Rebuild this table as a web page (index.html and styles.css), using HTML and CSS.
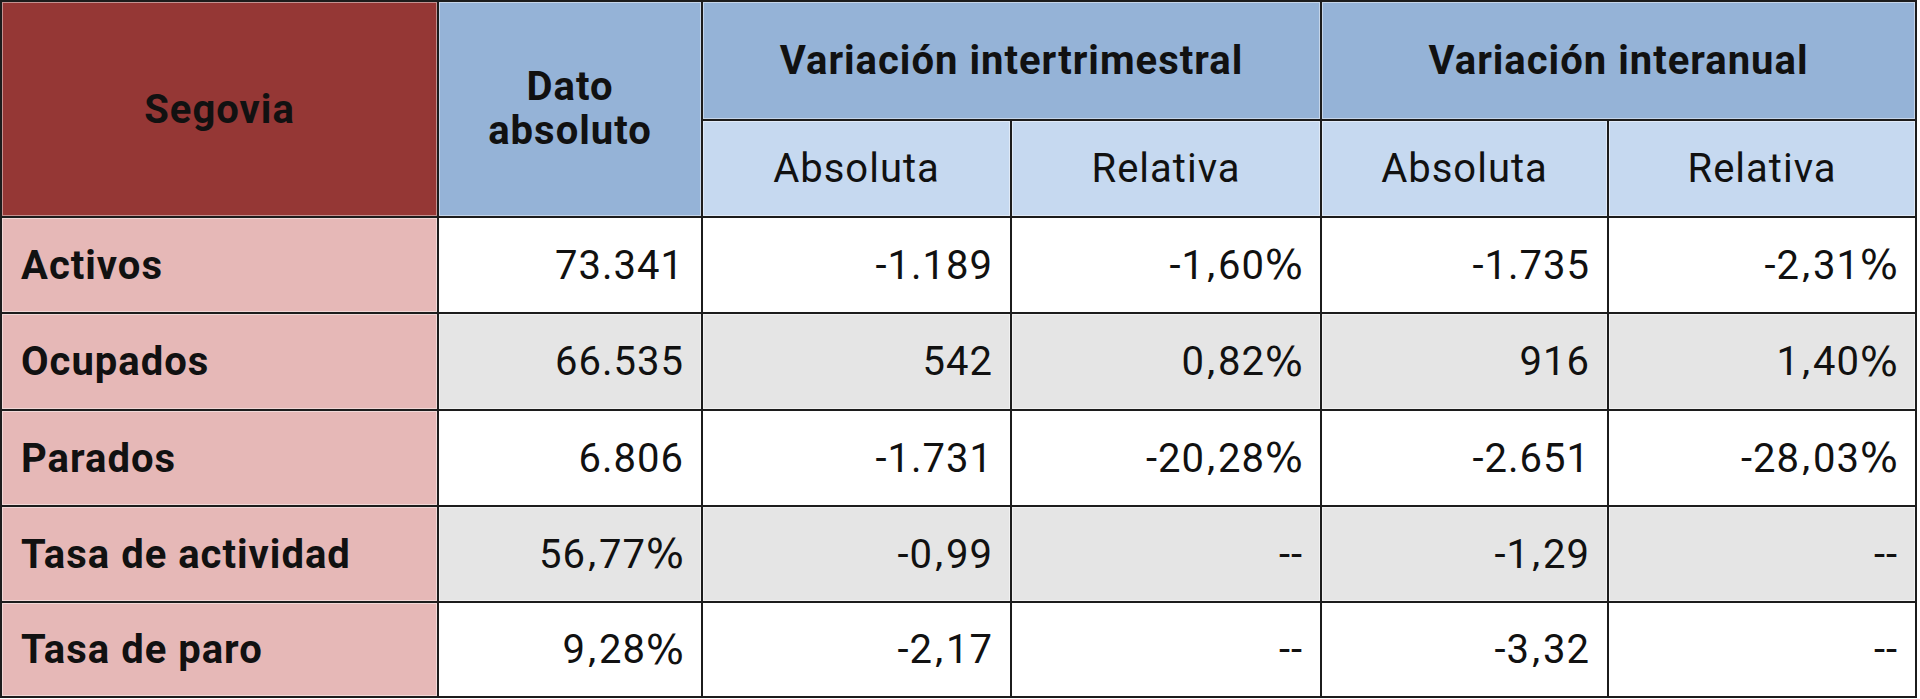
FILE: index.html
```html
<!DOCTYPE html>
<html lang="es">
<head>
<meta charset="utf-8">
<title>Segovia</title>
<link rel="stylesheet" href="styles.css">
</head>
<body>
<div class="grid">
  <div class="cell h-region span-r2">Segovia</div>
  <div class="cell h-main span-r2 center">Dato<br>absoluto</div>
  <div class="cell h-main span-c2 center">Variación intertrimestral</div>
  <div class="cell h-main span-c2 center">Variación interanual</div>
  <div class="cell h-sub center">Absoluta</div>
  <div class="cell h-sub center">Relativa</div>
  <div class="cell h-sub center">Absoluta</div>
  <div class="cell h-sub center">Relativa</div>

  <div class="cell label">Activos</div>
  <div class="cell num">73.341</div>
  <div class="cell num">-1.189</div>
  <div class="cell num">-1<span class="cm">,</span>60<span class="pct">%</span></div>
  <div class="cell num">-1.735</div>
  <div class="cell num">-2<span class="cm">,</span>31<span class="pct">%</span></div>

  <div class="cell label">Ocupados</div>
  <div class="cell num alt">66.535</div>
  <div class="cell num alt">542</div>
  <div class="cell num alt">0<span class="cm">,</span>82<span class="pct">%</span></div>
  <div class="cell num alt">916</div>
  <div class="cell num alt">1<span class="cm">,</span>40<span class="pct">%</span></div>

  <div class="cell label">Parados</div>
  <div class="cell num">6.806</div>
  <div class="cell num">-1.731</div>
  <div class="cell num">-20<span class="cm">,</span>28<span class="pct">%</span></div>
  <div class="cell num">-2.651</div>
  <div class="cell num">-28<span class="cm">,</span>03<span class="pct">%</span></div>

  <div class="cell label">Tasa de actividad</div>
  <div class="cell num alt">56<span class="cm">,</span>77<span class="pct">%</span></div>
  <div class="cell num alt">-0<span class="cm">,</span>99</div>
  <div class="cell num alt">--</div>
  <div class="cell num alt">-1<span class="cm">,</span>29</div>
  <div class="cell num alt">--</div>

  <div class="cell label">Tasa de paro</div>
  <div class="cell num">9<span class="cm">,</span>28<span class="pct">%</span></div>
  <div class="cell num">-2<span class="cm">,</span>17</div>
  <div class="cell num">--</div>
  <div class="cell num">-3<span class="cm">,</span>32</div>
  <div class="cell num">--</div>
</div>
</body>
</html>
```

FILE: styles.css
```css
html, body {
  margin: 0;
  padding: 0;
  background: #ffffff;
}

.grid {
  display: grid;
  grid-template-columns: 437px 264px 309px 310px 287px 308px;
  grid-template-rows: 119px 97px 96px 97px 96px 96px 95px;
  width: 1917px;
  box-sizing: border-box;
  border-left: 2px solid #1c1c1c;
  border-top: 2px solid #1c1c1c;
  font-family: Roboto, "Liberation Sans", sans-serif;
  color: #111111;
}

.cell {
  box-sizing: border-box;
  border-right: 2px solid #1c1c1c;
  border-bottom: 2px solid #1c1c1c;
  box-shadow: inset 0 0 0 1px rgba(255, 255, 255, 0.45);
  display: flex;
  align-items: center;
  font-size: 40px;
  letter-spacing: 1px;
  background: #ffffff;
}

.span-r2 { grid-row: span 2; }
.span-c2 { grid-column: span 2; }

.center {
  justify-content: center;
  text-align: center;
}

.h-region {
  background: #953735;
  justify-content: center;
  font-weight: 700;
}

.h-main {
  background: #95b3d7;
  font-weight: 700;
  line-height: 44px;
}

.h-sub {
  background: #c6d9f0;
  font-weight: 400;
}

.label {
  background: #e6b8b7;
  font-weight: 700;
  padding-left: 19px;
}

.num {
  justify-content: flex-end;
  padding-right: 17px;
  white-space: pre;
}

.num.alt {
  background: #e5e5e5;
}

.cm {
  font-family: "DejaVu Sans", sans-serif;
  font-size: 38px;
}

.pct {
  font-family: "DejaVu Sans", sans-serif;
  font-size: 40px;
  letter-spacing: 0;
}
```
